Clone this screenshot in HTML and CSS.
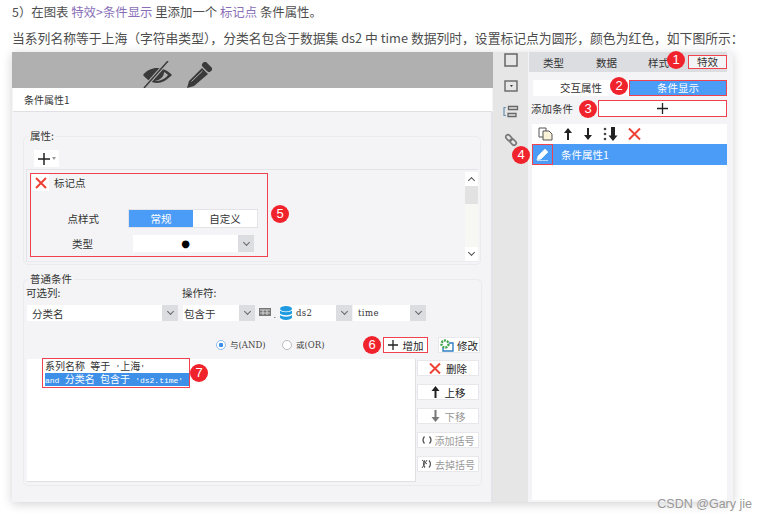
FILE: index.html
```html
<!DOCTYPE html>
<html lang="zh-CN">
<head>
  <meta charset="UTF-8"/>
  <title>条件属性</title>
  <link rel="stylesheet" href="styles.css">
</head>
<body>
<p class="line">5）在图表 <span class="tag">特效&gt;条件显示</span> 里添加一个 <span class="tag">标记点</span> 条件属性。</p>
<p class="line second">当系列名称等于上海（字符串类型），分类名包含于数据集 ds2 中 time 数据列时，设置标记点为圆形，颜色为红色，如下图所示：</p>

<div class="frame">
  <div class="dialog">
    <div class="dim">
      <svg width="30" height="27" viewBox="0 0 30 27"><path d="M0 14C4 9 9 7 14 7s10 2 15 7c-5 5-10 8-15 8S4 19 0 14z" fill="#3a3a3a"/><path d="M12 20c5 0 10-2 13-6-1-1-2-2-4-3 0 5-4 8-9 9z" fill="#b0b0b0"/><path d="M25 0 1 27" stroke="#b0b0b0" stroke-width="3.600"/><path d="M25 0 1 27" stroke="#3a3a3a" stroke-width="1.500"/></svg>
      <svg width="25" height="26" viewBox="0 0 25 26"><path d="M0 26l2-7L15 6l6 6L7 24z" fill="#3a3a3a"/><path d="M4.500 19.500 15.500 9" stroke="#b0b0b0" stroke-width="1"/><path d="M18 3l4 4" stroke="#3a3a3a" stroke-width="6" stroke-linecap="round"/></svg>
    </div>
    <div class="title">条件属性1</div>
    <div class="dialog-body">
      <fieldset class="group attrs">
        <legend>属性:</legend>
        <div class="plus-btn"><svg width="12" height="12" viewBox="0 0 12 12"><path d="M6 0v12M0 6h12" stroke="#222" stroke-width="1.500"/></svg><i class="tri"></i></div>
        <div class="attr-list">
          <div class="attr-box">
            <div class="attr-head">
              <span class="x-btn"><svg width="12" height="12" viewBox="0 0 12 12"><path d="M1 1l10 10M11 1 1 11" stroke="#ee4035" stroke-width="2"/></svg></span>
              <span>标记点</span>
            </div>
            <div class="attr-row style-row">
              <span class="attr-label">点样式</span>
              <div class="seg"><span class="seg-on">常规</span><span class="seg-off">自定义</span></div>
            </div>
            <div class="attr-row type-row">
              <span class="attr-label">类型</span>
              <div class="select type-select"><span class="val dot">●</span><span class="arrow"><i></i></span></div>
            </div>
          </div>
          <div class="scroll">
            <span class="scroll-btn"><i class="up"></i></span>
            <span class="scroll-thumb"></span>
            <span class="scroll-track"></span>
            <span class="scroll-btn"><i></i></span>
          </div>
        </div>
      </fieldset>

      <fieldset class="group cond">
        <legend>普通条件</legend>
        <div class="labels"><span class="lab-a">可选列:</span><span>操作符:</span></div>
        <div class="selects">
          <div class="select s-col"><span class="val">分类名</span><span class="arrow"><i></i></span></div>
          <div class="select s-op"><span class="val">包含于</span><span class="arrow"><i></i></span></div>
          <svg class="table-icon" width="19" height="12" viewBox="0 0 19 12"><path d="M0 1h12v8H0z" fill="#777"/><path d="M1 3h10M1 6h10M4 3v5M8 3v5" stroke="#e8e8e8" stroke-width=".8"/><path d="M15 10.500h1.500" stroke="#888"/></svg>
          <div class="select s-ds"><svg width="12" height="14" viewBox="0 0 12 14"><ellipse cx="6" cy="2.800" rx="6" ry="2.800" fill="#1e9be0"/><path d="M0 4.500c2 2.200 10 2.200 12 0v3c-2 2.200-10 2.200-12 0zM0 9c2 2.200 10 2.200 12 0v2.500c-1 3.200-11 3.200-12 0z" fill="#1e9be0"/></svg><span class="val mono">ds2</span><span class="arrow"><i></i></span></div>
          <div class="select s-time"><span class="val mono">time</span><span class="arrow"><i></i></span></div>
        </div>
        <div class="ops">
          <label class="radio"><i class="radio-dot on"></i>与(AND)</label>
          <label class="radio"><i class="radio-dot"></i>或(OR)</label>
          <span class="btn add"><svg width="10" height="10" viewBox="0 0 10 10"><path d="M5 0v10M0 5h10" stroke="#222" stroke-width="1.300"/></svg>增加</span>
          <span class="btn edit"><svg width="14" height="13" viewBox="0 0 14 13"><circle cx="5" cy="5" r="3.500" fill="none" stroke="#3fa34d" stroke-width="2.400" stroke-dasharray="2 1"/><path d="M9 4h4v8H3V9" fill="none" stroke="#2f7fc4" stroke-width="1.400"/></svg>修改</span>
        </div>
        <div class="cond-main">
          <div class="cond-list">
            <div class="cond-box">
              <div class="cond-row">系列名称 等于 <span class="latin">'</span>上海<span class="latin">'</span></div>
              <div class="cond-row picked"><span class="latin">and</span> 分类名 包含于 <span class="latin">'ds2.time'</span></div>
            </div>
          </div>
          <div class="side-btns">
            <span class="btn"><svg width="12" height="11" viewBox="0 0 12 11"><path d="M1 .5l10 10M11 .5l-10 10" stroke="#ee4035" stroke-width="2"/></svg>删除</span>
            <span class="btn"><svg width="9" height="12" viewBox="0 0 9 12"><path d="M4.500 0l4 5H5.500v7h-2V5H.5z" fill="#222"/></svg>上移</span>
            <span class="btn off"><svg width="9" height="12" viewBox="0 0 9 12"><path d="M4.500 12l-4-5h3V0h2v7h3z" fill="#777"/></svg>下移</span>
            <span class="btn off tight"><svg width="10" height="8" viewBox="0 0 10 8"><path d="M2.500 .5C.8 2.500.8 5.500 2.500 7.500M7.500 .5c1.700 2 1.700 5 0 7" fill="none" stroke="#555" stroke-width="1.300"/></svg>添加括号</span>
            <span class="btn off tight"><svg width="11" height="10" viewBox="0 0 11 10"><path d="M4 1.500C2.300 3.500 2.300 6.500 4 8.500M8 1.500c1.700 2 1.700 5 0 7" fill="none" stroke="#555" stroke-width="1.200"/><path d="M1 1l5 4M6 1 1 9" stroke="#555" stroke-width="1"/></svg>去掉括号</span>
          </div>
        </div>
      </fieldset>
    </div>
  </div>

  <div class="strip">
    <svg width="14" height="14" viewBox="0 0 14 14"><rect x="1" y="1" width="12" height="12" fill="none" stroke="#666" stroke-width="1.500"/></svg>
    <svg width="14" height="12" viewBox="0 0 14 12"><rect x="1" y="1" width="12" height="10" fill="none" stroke="#666" stroke-width="1.400"/><path d="M6 5h3L7.500 7z" fill="#333"/></svg>
    <svg width="16" height="14" viewBox="0 0 16 14"><path d="M5.500 1.500h9v3h-9zM5 8.500h8v3H5z" fill="none" stroke="#666" stroke-width="1.300"/><path d="M3 2.500H1v8h2" fill="none" stroke="#6a8fb0" stroke-width="1.200"/></svg>
    <svg width="16" height="16" viewBox="0 0 16 16"><g fill="none" stroke="#777" stroke-width="1.700" transform="rotate(45 8 8)"><rect x="1.500" y="5.800" width="7" height="4.400" rx="2.200"/><rect x="7.500" y="5.800" width="7" height="4.400" rx="2.200"/></g></svg>
  </div>

  <div class="panel">
    <div class="tabs">
      <span class="tab t1">类型</span><span class="tab t2">数据</span><span class="tab t3">样式</span><span class="tab active">特效</span>
    </div>
    <div class="switch">
      <span class="sw-off">交互属性</span><span class="sw-on">条件显示</span>
    </div>
    <div class="add-row">
      <span>添加条件</span>
      <span class="add-cond"><svg width="11" height="11" viewBox="0 0 11 11"><path d="M5.500 0v11M0 5.500h11" stroke="#222" stroke-width="1.300"/></svg></span>
    </div>
    <div class="prop-list">
      <div class="tools">
        <svg width="15" height="14" viewBox="0 0 15 14"><path d="M1 1h7v9H1z" fill="#fff" stroke="#555"/><path d="M5 4h6l3 3v6H5z" fill="#fbf3d9" stroke="#555"/></svg>
        <svg width="10" height="12" viewBox="0 0 10 12"><path d="M5 0l4 5H6v7H4V5H1z" fill="#222"/></svg>
        <svg width="10" height="12" viewBox="0 0 10 12"><path d="M5 12 1 7h3V0h2v7h3z" fill="#222"/></svg>
        <svg width="15" height="14" viewBox="0 0 15 14"><path d="M10 14 5.500 8.500H8V0h4v8.500h2.500z" fill="#222"/><circle cx="2" cy="2" r="1.300" fill="#444"/><circle cx="2" cy="7" r="1.300" fill="#444"/><circle cx="2" cy="12" r="1.300" fill="#444"/></svg>
        <svg width="13" height="12" viewBox="0 0 13 12"><path d="M1 .5l11 11M12 .5l-11 11" stroke="#ee4035" stroke-width="2"/></svg>
      </div>
      <div class="prop-row">
        <span class="pen-btn"><svg width="13" height="13" viewBox="0 0 13 13"><path d="M9 1l3 3-7 7-4 1 1-4zM1 12.500h11" fill="#fff" stroke="#fff" stroke-width=".6"/></svg></span>
        <span>条件属性1</span>
      </div>
    </div>
  </div>

  <span class="badge b1">1</span>
  <span class="badge b2">2</span>
  <span class="badge b3">3</span>
  <span class="badge b4">4</span>
  <span class="badge b5">5</span>
  <span class="badge b6">6</span>
  <span class="badge b7">7</span>
</div>

<span class="mark">CSDN @Gary jie</span>
</body>
</html>
```

FILE: styles.css
```css
html, body {
  height: 521px;
  overflow: hidden;
}

body {
  margin: 0;
  position: relative;
  background: #fff;
  font-family: "Noto Sans CJK SC", "Liberation Sans", sans-serif;
  font-size: 10.5px;
  color: #333;
}

.line {
  margin: 0 0 0 12px;
  height: 25px;
  line-height: 25px;
  font-size: 12.4px;
  color: #4d4d4d;
  white-space: nowrap;
}

.second {
  font-size: 12.8px;
}

.tag {
  color: #8a6fb8;
}

.frame {
  position: relative;
  display: flex;
  margin: 2px 0 0 12px;
  width: 721px;
  height: 450px;
  box-shadow: 0 2px 10px rgba(0, 0, 0, 0.18);
  background: #f4f4f6;
}

/* left dialog */
.dialog {
  width: 481px;
  display: flex;
  flex-direction: column;
}

.dim {
  height: 36px;
  background: #b0b0b0;
  display: flex;
  align-items: flex-end;
  gap: 14px;
  padding-left: 131px;
  box-sizing: border-box;
}

.title {
  height: 24px;
  line-height: 24px;
  margin: 0 1px;
  padding-left: 11px;
  background: #fff;
  border-bottom: 1px solid #dfdfe4;
  box-sizing: border-box;
  font-size: 10px;
}

.dialog-body {
  flex: 1;
  border-right: 2px solid #e4e4e8;
  padding: 24px 11px 0;
}

.group {
  margin: 0;
  padding: 0;
  border: 1px solid #ebebef;
  border-radius: 5px;
  box-sizing: border-box;
  width: 458px;
  position: relative;
}

.group legend {
  position: absolute;
  left: 4px;
  top: -8px;
  padding: 0 2px;
  background: #f4f4f6;
  line-height: 13px;
}

.attrs {
  height: 129px;
  padding: 13px 2px 0;
}

.plus-btn {
  display: flex;
  align-items: center;
  justify-content: center;
  gap: 2px;
  margin-left: 8px;
  width: 25px;
  height: 17px;
  background: #fff;
}

.tri {
  border: 2.5px solid transparent;
  border-top: 3px solid #999;
  border-bottom: 0;
}

.attr-list {
  display: flex;
  justify-content: space-between;
  margin-top: 2px;
  height: 93px;
  padding-top: 3px;
  box-sizing: border-box;
  border-top: 1px solid #e4e4e8;
  border-left: 1px solid #e4e4e8;
  border-bottom: 1px solid #ebebef;
}

.attr-box {
  width: 238px;
  height: 84px;
  margin-left: 3px;
  border: 1px solid #f0424e;
  box-sizing: border-box;
  display: flex;
  flex-direction: column;
}

.attr-head {
  display: flex;
  align-items: center;
  gap: 5px;
  height: 17px;
  margin-left: 1px;
}

.x-btn {
  display: flex;
  align-items: center;
  justify-content: center;
  width: 17px;
  height: 17px;
  background: #fff;
}

.attr-row {
  display: flex;
  align-items: center;
}

.attr-label {
  width: 97px;
  text-align: right;
  box-sizing: border-box;
  padding-right: 29px;
}

.style-row {
  margin-top: 18px;
}

.type-row {
  margin-top: 7px;
}

.type-row .attr-label {
  padding-right: 35px;
  margin-right: 5px;
}

.seg {
  display: flex;
  width: 130px;
  height: 19px;
  line-height: 17px;
  border: 1px solid #e4e4e8;
  box-sizing: border-box;
  text-align: center;
}

.seg-on {
  width: 64px;
  background: #4b9cf7;
  color: #fff;
}

.seg-off {
  flex: 1;
  background: #fff;
}

.select {
  display: flex;
  align-items: center;
  height: 16px;
  box-sizing: border-box;
  background: #fff;
}

.val {
  flex: 1;
  padding-left: 5px;
  white-space: nowrap;
}

.dot {
  padding: 0;
  text-align: center;
  font: 10px/16px "DejaVu Sans", sans-serif;
  color: #000;
}

.mono {
  font: 8.5px/16px "DejaVu Serif", serif;
  letter-spacing: 0.4px;
}

.arrow {
  display: flex;
  align-items: center;
  justify-content: center;
  align-self: stretch;
  width: 16px;
  background: #dcdde0;
}

.arrow i {
  width: 4px;
  height: 4px;
  margin-top: -3px;
  border-right: 1px solid #666;
  border-bottom: 1px solid #666;
  transform: rotate(45deg);
}

.type-select {
  width: 121px;
  height: 17px;
}

.scroll {
  display: flex;
  flex-direction: column;
  width: 13px;
  margin-top: -1px;
}

.scroll-btn {
  display: flex;
  align-items: center;
  justify-content: center;
  height: 14px;
  background: #fff;
}

.scroll-btn i {
  width: 4px;
  height: 4px;
  margin-top: -3px;
  border-right: 1.5px solid #555;
  border-bottom: 1.5px solid #555;
  transform: rotate(45deg);
}

.scroll-btn i.up {
  margin-top: 3px;
  transform: rotate(225deg);
}

.scroll-thumb {
  height: 18px;
  background: #e2e2e2;
}

.scroll-track {
  flex: 1;
  background: #f7f7f3;
}

.cond {
  height: 207px;
  margin-top: 14px;
  padding: 6px 2px 0 2px;
}

.labels {
  display: flex;
  height: 14px;
  line-height: 14px;
}

.lab-a {
  width: 156px;
}

.selects {
  display: flex;
  align-items: center;
  margin-top: 5px;
  margin-left: 1px;
}

.s-col {
  width: 151px;
  margin-right: 5px;
}

.s-op {
  width: 72px;
  margin-right: 4px;
}

.s-op .val {
  padding-left: 1px;
}

.table-icon {
  margin-right: 2px;
}

.s-ds {
  width: 72px;
  margin-right: 1px;
}

.s-ds .val {
  padding-left: 4px;
}

.s-time {
  width: 73px;
}

.ops {
  display: flex;
  align-items: center;
  margin: 16px -1px 0 0;
  height: 16px;
  padding-left: 190px;
}

.radio {
  display: flex;
  align-items: center;
  gap: 4px;
  width: 66px;
  font: 8.5px/16px "DejaVu Serif", "Noto Sans CJK SC", serif;
  color: #444;
}

.radio-dot {
  width: 10px;
  height: 10px;
  border: 1px solid #bbb;
  border-radius: 50%;
  background: #fff;
  box-sizing: border-box;
}

.radio-dot.on {
  border: 1px solid #8fbdf0;
  background: radial-gradient(circle, #3f8fe8 0 2px, #fff 2.500px);
}

.btn {
  display: flex;
  align-items: center;
  justify-content: center;
  gap: 5px;
  height: 16px;
  width: 62px;
  background: #fff;
  border: 1px solid #e8e8ec;
  box-sizing: border-box;
  font-size: 10.5px;
  color: #222;
  white-space: nowrap;
}

.btn.off {
  color: #9a9a9a;
}

.btn.tight {
  gap: 3px;
  font-size: 10px;
}

.add {
  width: 45px;
  margin-left: auto;
  border-color: #f0424e;
}

.edit {
  width: 42px;
  margin-left: 10px;
  gap: 3px;
}

.cond-main {
  display: flex;
  margin-top: 6px;
  margin-left: 1px;
}

.cond-list {
  width: 389px;
  height: 123px;
  padding-left: 15px;
  box-sizing: border-box;
  background: #fff;
  border-right: 1px solid #dfdfe4;
  border-bottom: 1px solid #dfdfe4;
}

.cond-box {
  width: 148px;
  height: 30px;
  margin-top: -1px;
  border: 1px solid #f0424e;
  padding: 1px 0 0 2px;
  box-sizing: border-box;
}

.cond-row {
  height: 13px;
  line-height: 12px;
  font-size: 10px;
  word-spacing: 3px;
  white-space: nowrap;
}

.latin {
  font: 8px/12px "Liberation Mono", monospace;
}

.picked {
  width: 144px;
  background: #3d8fe8;
  color: #fff;
}

.side-btns {
  display: flex;
  flex-direction: column;
  gap: 8px;
  margin-left: 1px;
  padding-top: 1px;
}

/* middle strip */
.strip {
  width: 35px;
  background: #e6e6e6;
  display: flex;
  flex-direction: column;
  align-items: center;
  gap: 13px;
  padding-top: 1px;
  box-sizing: border-box;
}

/* right panel */
.panel {
  width: 205px;
  padding: 0 0 2px 1px;
  box-sizing: border-box;
  display: flex;
  flex-direction: column;
}

.tabs {
  display: flex;
  align-items: center;
  height: 20px;
  background: #dcdde0;
  margin-right: 6px;
}

.tab {
  width: 21px;
  text-align: center;
  white-space: nowrap;
}

.t1 {
  margin-left: 14px;
}

.t2 {
  margin-left: 32px;
}

.t3 {
  margin-left: 31px;
}

.active {
  margin-left: 19px;
  width: 41px;
  height: 14px;
  line-height: 12px;
  background: #f4f4f6;
  border: 1px solid #f0424e;
  box-sizing: border-box;
}

.switch {
  display: flex;
  height: 16px;
  margin: 8px 6px 0 4px;
}

.sw-off {
  width: 96px;
  background: #fff;
  text-align: center;
  line-height: 16px;
}

.sw-on {
  flex: 1;
  background: #4b9cf7;
  color: #fff;
  text-align: center;
  line-height: 14px;
  border: 1px solid #f0424e;
}

.add-row {
  display: flex;
  align-items: center;
  justify-content: space-between;
  height: 17px;
  margin: 4px 6px 0 2px;
}

.add-cond {
  display: flex;
  align-items: center;
  justify-content: center;
  width: 129px;
  height: 17px;
  background: #fff;
  border: 1px solid #f0424e;
  box-sizing: border-box;
}

.prop-list {
  flex: 1;
  margin: 7px 6px 0 3px;
  background: #fff;
}

.tools {
  display: flex;
  align-items: center;
  gap: 10px;
  height: 20px;
  padding-left: 6px;
}

.prop-row {
  display: flex;
  align-items: center;
  gap: 8px;
  height: 21px;
  background: #4b9cf7;
  color: #fff;
}

.pen-btn {
  display: flex;
  align-items: center;
  justify-content: center;
  width: 21px;
  height: 21px;
  border: 1px solid #f0424e;
  box-sizing: border-box;
}

/* numbered markers */
.badge {
  position: absolute;
  width: 18px;
  height: 18px;
  border-radius: 50%;
  background: #f0232d;
  color: #fff;
  text-align: center;
  font: 13px/18px "Liberation Sans", sans-serif;
}

.b1 { left: 655px; top: -1px; }
.b2 { left: 598px; top: 25px; }
.b3 { left: 567px; top: 48px; }
.b4 { left: 500px; top: 94px; }
.b5 { left: 259px; top: 153px; }
.b6 { left: 351px; top: 284px; }
.b7 { left: 178px; top: 312px; }

.mark {
  position: absolute;
  right: 14px;
  top: 497px;
  font: 12.5px/14px "Liberation Sans", sans-serif;
  color: #999;
}
```
